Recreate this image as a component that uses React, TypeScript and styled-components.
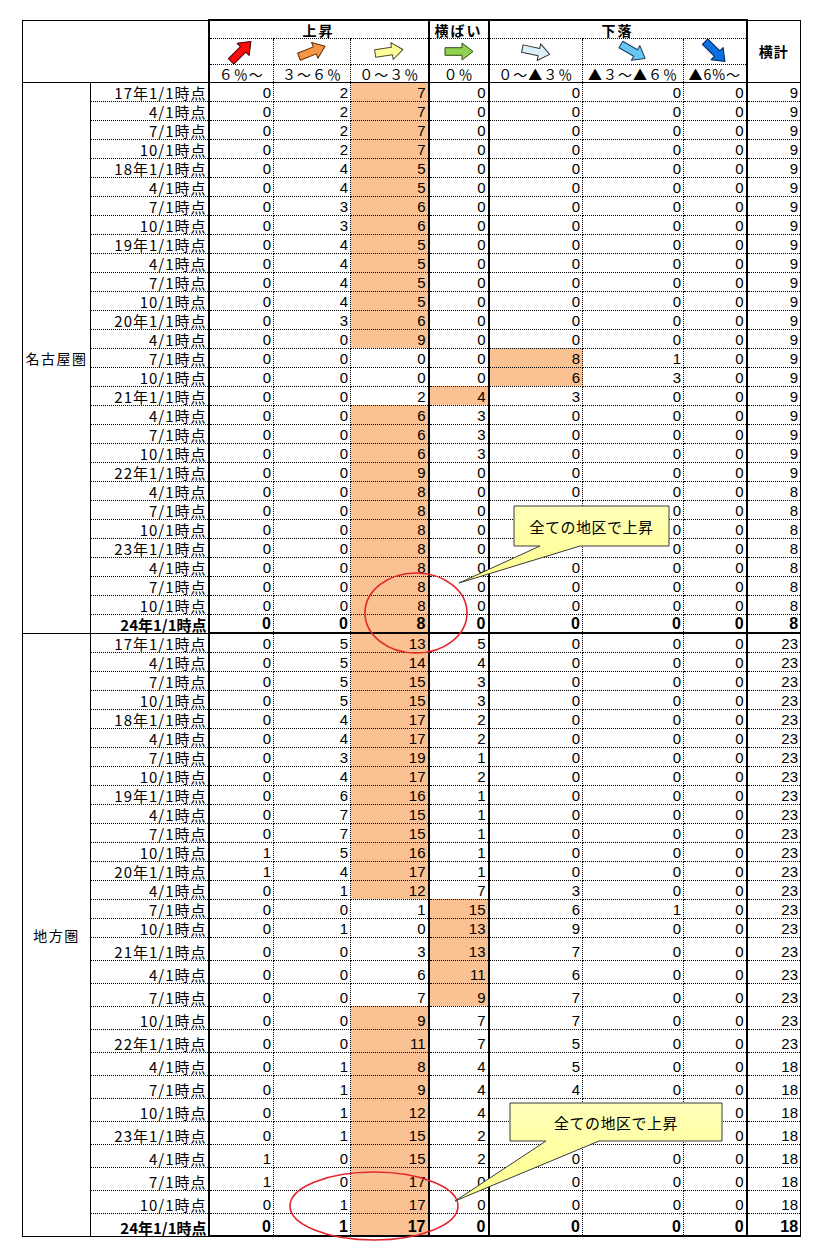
import React from "react";
import styled, { createGlobalStyle } from "styled-components";

type Edge = "thin" | "thick" | "dot" | "none";

const line = (e: Edge) =>
  e === "thin" ? "1px solid #000" : e === "thick" ? "2px solid #000" : e === "dot" ? "1px dotted #000" : "none";

// right edge of each column: region, date, 7 range columns, total
const rightEdge: Edge[] = ["thin", "thick", "dot", "dot", "thick", "thick", "dot", "dot", "thick", "thin"];
const colWidths = [68, 118, 65, 77, 78, 60, 94, 101, 63, 54];

const GlobalStyle = createGlobalStyle`
  html, body { margin: 0; padding: 0; background: #fff; }
  body { font-family: "Noto Sans CJK JP", "Liberation Sans", sans-serif; color: #000; }
`;

const Page = styled.div`
  position: relative;
  width: 818px;
  height: 1259px;
  padding: 19px 0 0 22px;
  box-sizing: border-box;
  overflow: hidden;
`;

const Sheet = styled.table`
  border-collapse: collapse;
  table-layout: fixed;
  width: 778px;
`;

const Tr = styled.tr<{ $h: number }>`
  height: ${(p) => p.$h}px;
`;

const Corner = styled.th`
  border-left: ${line("thin")};
  border-top: ${line("thin")};
  border-right: ${line("thick")};
  border-bottom: ${line("thin")};
  padding: 0;
`;

const GroupHead = styled.th`
  border-top: ${line("thick")};
  border-right: ${line("thick")};
  border-bottom: ${line("dot")};
  padding: 0;
  font-size: 14px;
  font-weight: 700;
  letter-spacing: 2px;
  line-height: 16px;
  text-align: center;
  vertical-align: bottom;
`;

const TotalHead = styled.th`
  border-top: ${line("thin")};
  border-right: ${line("thin")};
  border-bottom: ${line("thin")};
  padding: 0;
  font-size: 14px;
  font-weight: 700;
  letter-spacing: 1px;
  text-align: center;
  vertical-align: middle;
`;

const ArrowCell = styled.td<{ $edge: Edge }>`
  border-right: ${(p) => line(p.$edge)};
  border-bottom: ${line("dot")};
  padding: 0;
  text-align: center;
  vertical-align: middle;
`;

const RangeCell = styled.td<{ $edge: Edge }>`
  border-right: ${(p) => line(p.$edge)};
  border-bottom: ${line("thin")};
  padding: 0;
  font-size: 14px;
  letter-spacing: 1px;
  line-height: 16px;
  text-align: center;
  vertical-align: bottom;
  white-space: nowrap;
  overflow: hidden;
`;

const RegionCell = styled.td`
  border-left: ${line("thin")};
  border-right: ${line("thin")};
  border-bottom: ${line("thin")};
  padding: 0;
  font-size: 14px;
  letter-spacing: 1.5px;
  text-align: center;
  vertical-align: middle;
`;

const DateCell = styled.td<{ $bottom: Edge; $bold?: boolean }>`
  border-right: ${line("thick")};
  border-bottom: ${(p) => line(p.$bottom)};
  padding: 0 1px 0 0;
  font-family: "Liberation Sans Narrow", "Noto Sans CJK JP", sans-serif;
  font-size: 15px;
  font-weight: ${(p) => (p.$bold ? 700 : 400)};
  letter-spacing: ${(p) => (p.$bold ? 0 : 1)}px;
  line-height: 17px;
  text-align: right;
  vertical-align: bottom;
  white-space: nowrap;
`;

const NumCell = styled.td<{ $edge: Edge; $bottom: Edge; $hi?: boolean; $bold?: boolean }>`
  border-right: ${(p) => line(p.$edge)};
  border-bottom: ${(p) => line(p.$bottom)};
  background: ${(p) => (p.$hi ? "#FAC192" : "transparent")};
  padding: 0 2px 0 0;
  font-family: "Liberation Sans Narrow", "Liberation Sans", sans-serif;
  font-size: ${(p) => (p.$bold ? 16 : 15)}px;
  font-weight: ${(p) => (p.$bold ? 700 : 400)};
  line-height: 17px;
  text-align: right;
  vertical-align: bottom;
`;

const Overlay = styled.svg`
  position: absolute;
  top: 0;
  left: 0;
  width: 818px;
  height: 1259px;
  pointer-events: none;
`;

const Note = styled.div<{ $x: number; $y: number; $w: number; $h: number }>`
  position: absolute;
  left: ${(p) => p.$x}px;
  top: ${(p) => p.$y}px;
  width: ${(p) => p.$w}px;
  height: ${(p) => p.$h}px;
  display: flex;
  align-items: center;
  justify-content: center;
  font-size: 15px;
  letter-spacing: 0.5px;
`;

const ArrowSvg = styled.svg`
  display: block;
  margin: 0 auto;
`;

const Arrow = ({ fill, stroke, angle }: { fill: string; stroke: string; angle: number }) => (
  <ArrowSvg width={38} height={25} viewBox="-19 -12.5 38 25">
    <path
      d="M-14,-3.8 L3,-3.8 L3,-8.5 L14,0 L3,8.5 L3,3.8 L-14,3.8 Z"
      fill={fill}
      stroke={stroke}
      strokeWidth={1}
      strokeLinejoin="round"
      transform={`rotate(${angle})`}
    />
  </ArrowSvg>
);

const arrows = [
  { fill: "#FF0A0A", stroke: "#4a0000", angle: -45 },
  { fill: "#F79646", stroke: "#5e2d00", angle: -22 },
  { fill: "#FFFF99", stroke: "#4d4d2a", angle: -8 },
  { fill: "#92D050", stroke: "#2f4f14", angle: 0 },
  { fill: "#DCEFFB", stroke: "#333", angle: 12 },
  { fill: "#66C6F5", stroke: "#1b3b5a", angle: 30 },
  { fill: "#0B6FE0", stroke: "#00205a", angle: 45 },
];

const ranges = ["６％～", "３～６％", "０～３％", "０％", "０～▲３％", "▲３～▲６％", "▲6%～"];

const labels = (() => {
  const out: string[] = [];
  for (let y = 17; y <= 23; y++) {
    ["1/1", "4/1", "7/1", "10/1"].forEach((q, i) => out.push(i === 0 ? `${y}年${q}時点` : `${q}時点`));
  }
  out.push("24年1/1時点");
  return out;
})();

const rep = (s: string, n: number) => Array.from({ length: n }, () => s);

// "*" marks a shaded cell, "_" a cell hidden under a callout
const nagoya = [
  ...rep("0 2 7* 0 0 0 0 9", 4),
  ...rep("0 4 5* 0 0 0 0 9", 2),
  ...rep("0 3 6* 0 0 0 0 9", 2),
  ...rep("0 4 5* 0 0 0 0 9", 4),
  "0 3 6* 0 0 0 0 9",
  "0 0 9* 0 0 0 0 9",
  "0 0 0 0 8* 1 0 9",
  "0 0 0 0 6* 3 0 9",
  "0 0 2 4* 3 0 0 9",
  ...rep("0 0 6* 3 0 0 0 9", 3),
  "0 0 9* 0 0 0 0 9",
  "0 0 8* 0 0 0 0 8",
  "0 0 8* 0 _ 0 0 8",
  "0 0 8* 0 _ 0 0 8",
  "0 0 8* 0 _ 0 0 8",
  ...rep("0 0 8* 0 0 0 0 8", 4),
];

const chiho = [
  "0 5 13* 5 0 0 0 23",
  "0 5 14* 4 0 0 0 23",
  "0 5 15* 3 0 0 0 23",
  "0 5 15* 3 0 0 0 23",
  "0 4 17* 2 0 0 0 23",
  "0 4 17* 2 0 0 0 23",
  "0 3 19* 1 0 0 0 23",
  "0 4 17* 2 0 0 0 23",
  "0 6 16* 1 0 0 0 23",
  "0 7 15* 1 0 0 0 23",
  "0 7 15* 1 0 0 0 23",
  "1 5 16* 1 0 0 0 23",
  "1 4 17* 1 0 0 0 23",
  "0 1 12* 7 3 0 0 23",
  "0 0 1 15* 6 1 0 23",
  "0 1 0 13* 9 0 0 23",
  "0 0 3 13* 7 0 0 23",
  "0 0 6 11* 6 0 0 23",
  "0 0 7 9* 7 0 0 23",
  "0 0 9* 7 7 0 0 23",
  "0 0 11* 7 5 0 0 23",
  "0 1 8* 4 5 0 0 18",
  "0 1 9* 4 4 0 0 18",
  "0 1 12* 4 _ _ 0 18",
  "0 1 15* 2 _ _ 0 18",
  "1 0 15* 2 0 0 0 18",
  "1 0 17* 0 0 0 0 18",
  "0 1 17* 0 0 0 0 18",
  "0 1 17* 0 0 0 0 18",
];

const regions = [
  { name: "名古屋圏", rows: nagoya, height: () => 19 },
  { name: "地方圏", rows: chiho, height: (i: number) => (i < 16 ? 19 : 23) },
];

const parse = (s: string) =>
  s.split(" ").map((t) => ({ v: t === "_" ? "" : t.replace("*", ""), hi: t.endsWith("*") }));

const callouts = [
  { path: "M514,506 H669 V546 H580 L459,583 L540,546 H514 Z", x: 514, y: 506, w: 155, h: 40 },
  { path: "M510,1103 H722 V1141 H599 L455,1201 L546,1141 H510 Z", x: 510, y: 1103, w: 212, h: 38 },
];

export default function App() {
  return (
    <Page>
      <GlobalStyle />
      <Sheet>
        <colgroup>
          {colWidths.map((w, i) => (
            <col key={i} style={{ width: w }} />
          ))}
        </colgroup>
        <thead>
          <Tr $h={18}>
            <Corner colSpan={2} rowSpan={3} />
            <GroupHead colSpan={3}>上昇</GroupHead>
            <GroupHead>横ばい</GroupHead>
            <GroupHead colSpan={3}>下落</GroupHead>
            <TotalHead rowSpan={3}>横計</TotalHead>
          </Tr>
          <Tr $h={25}>
            {arrows.map((a, j) => (
              <ArrowCell key={j} $edge={rightEdge[j + 2]}>
                <Arrow {...a} />
              </ArrowCell>
            ))}
          </Tr>
          <Tr $h={18}>
            {ranges.map((r, j) => (
              <RangeCell key={j} $edge={rightEdge[j + 2]}>
                {r}
              </RangeCell>
            ))}
          </Tr>
        </thead>
        <tbody>
          {regions.map((region) =>
            region.rows.map((row, i) => {
              const last = i === region.rows.length - 1;
              return (
                <Tr key={region.name + i} $h={region.height(i)}>
                  {i === 0 && <RegionCell rowSpan={region.rows.length}>{region.name}</RegionCell>}
                  <DateCell $bottom={last ? "thin" : "dot"} $bold={last}>
                    {labels[i]}
                  </DateCell>
                  {parse(row).map((c, j) => (
                    <NumCell
                      key={j}
                      $edge={rightEdge[j + 2]}
                      $bottom={last ? "thick" : "dot"}
                      $hi={c.hi}
                      $bold={last}
                    >
                      {c.v}
                    </NumCell>
                  ))}
                </Tr>
              );
            })
          )}
        </tbody>
      </Sheet>
      <Overlay viewBox="0 0 818 1259">
        <defs>
          <linearGradient id="noteFill" x1="0" y1="0" x2="0" y2="1">
            <stop offset="0" stopColor="#FFFFB8" />
            <stop offset="1" stopColor="#FFFF8E" />
          </linearGradient>
        </defs>
        <ellipse cx={416} cy={613} rx={51} ry={40} fill="none" stroke="#E3262B" strokeWidth={1.6} />
        <ellipse cx={374} cy={1206} rx={84} ry={34} fill="none" stroke="#E3262B" strokeWidth={1.6} />
        {callouts.map((c, i) => (
          <path key={i} d={c.path} fill="url(#noteFill)" stroke="#3a3a3a" strokeWidth={1} />
        ))}
      </Overlay>
      {callouts.map((c, i) => (
        <Note key={i} $x={c.x} $y={c.y} $w={c.w} $h={c.h}>
          全ての地区で上昇
        </Note>
      ))}
    </Page>
  );
}
